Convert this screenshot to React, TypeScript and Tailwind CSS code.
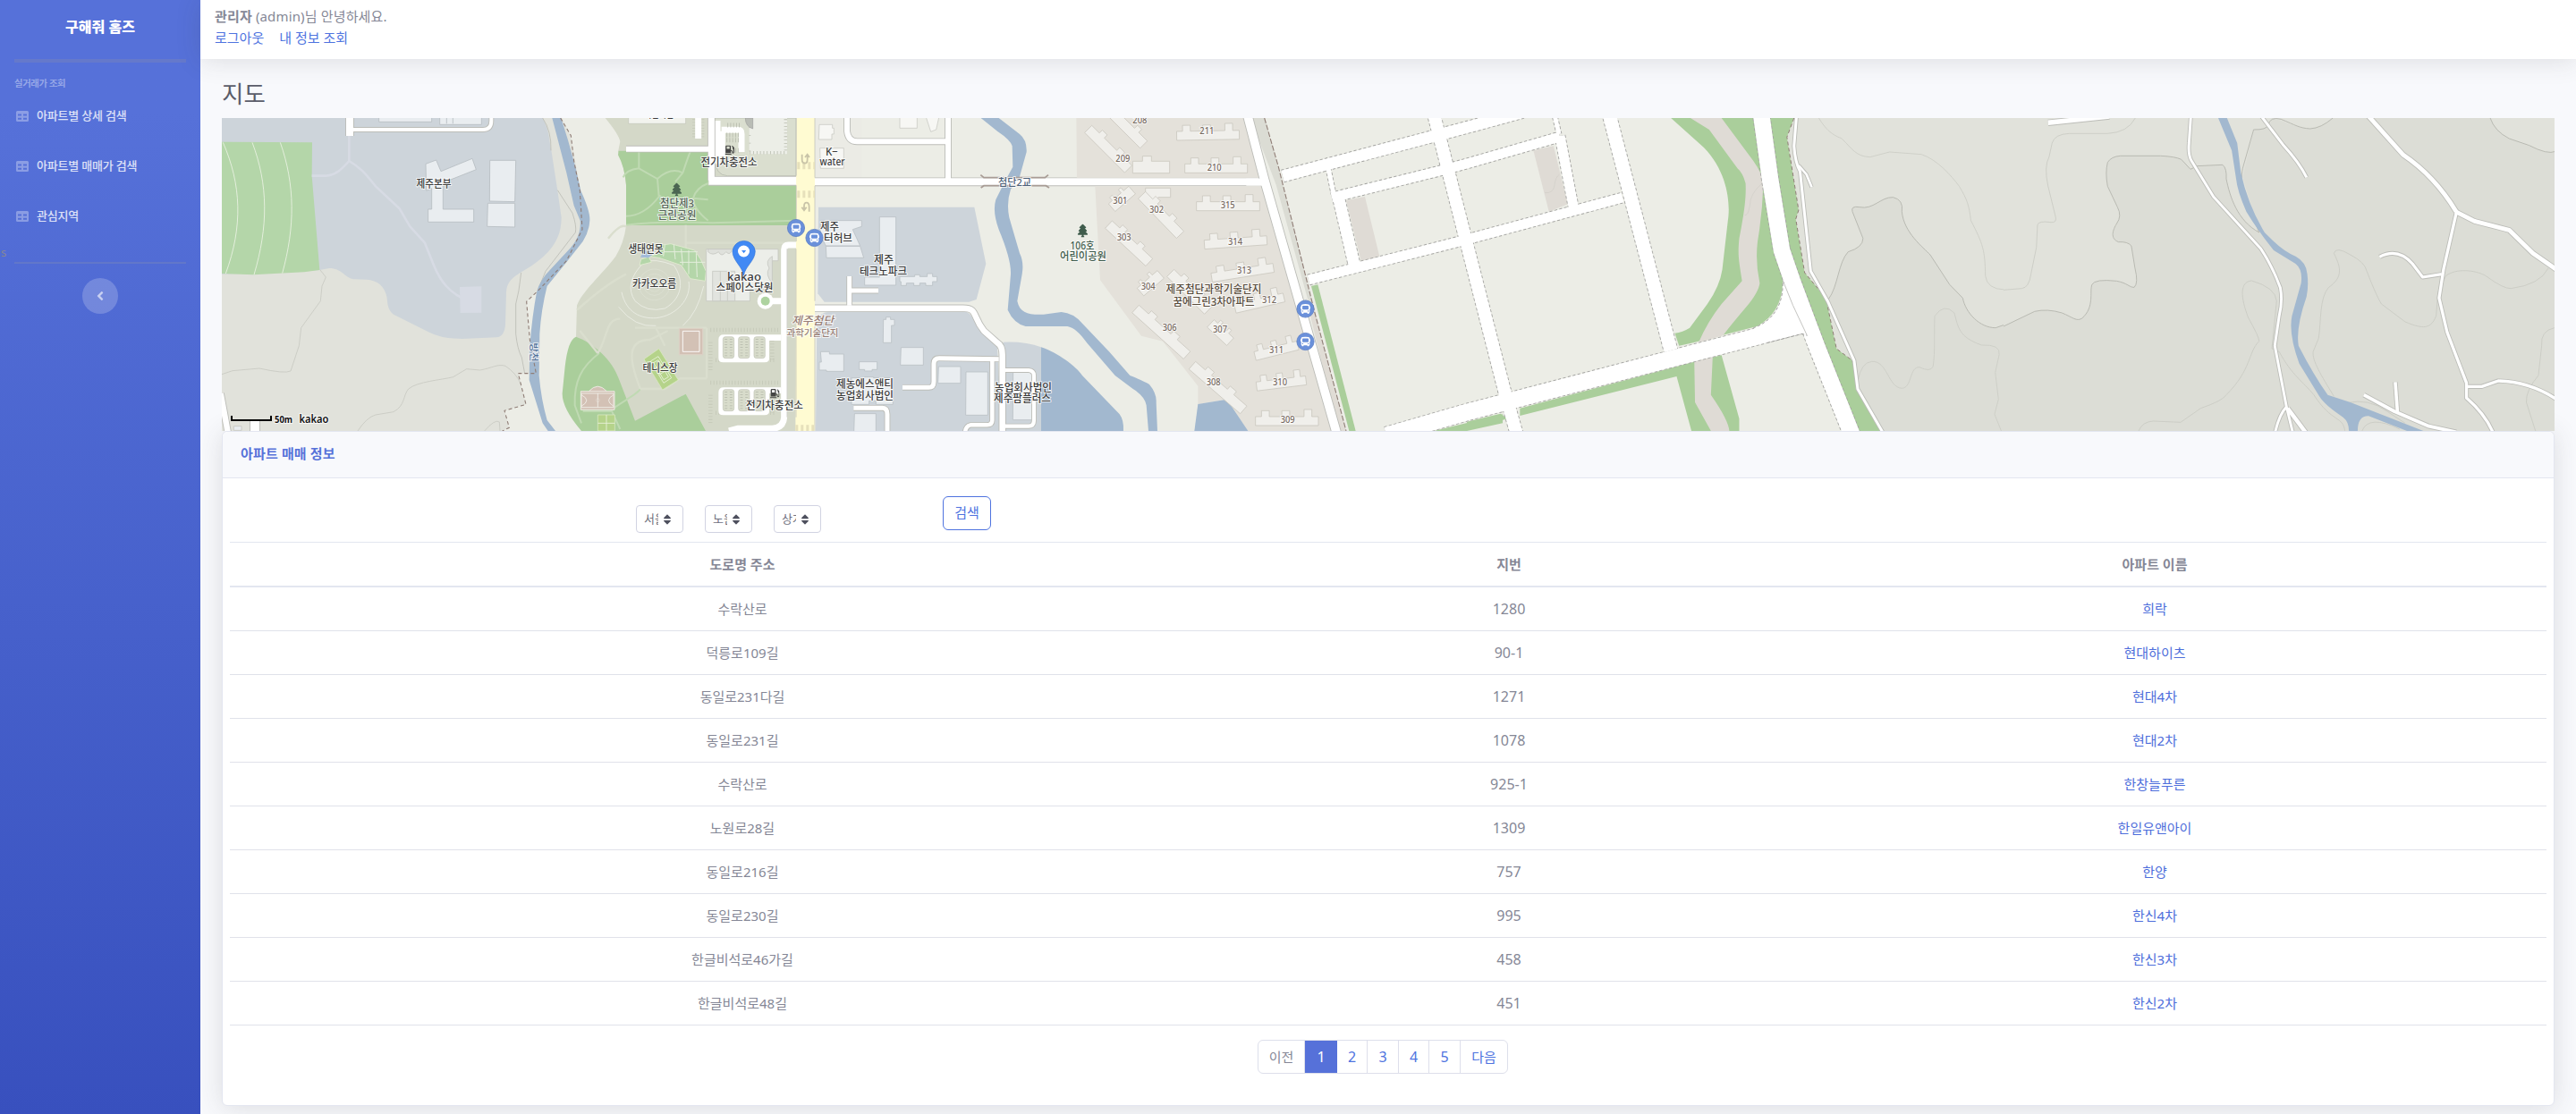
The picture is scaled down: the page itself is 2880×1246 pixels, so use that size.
import React from "react";
import { FaAngleLeft, FaGasPump, FaBus, FaTree, FaSort } from "react-icons/fa";

type RoadSpec = { d: string; w: number };

const menu = ["아파트별 상세 검색", "아파트별 매매가 검색", "관심지역"];

const apartments: [string, string, string][] = [
  ["수락산로", "1280", "희락"],
  ["덕릉로109길", "90-1", "현대하이츠"],
  ["동일로231다길", "1271", "현대4차"],
  ["동일로231길", "1078", "현대2차"],
  ["수락산로", "925-1", "한창늘푸른"],
  ["노원로28길", "1309", "한일유앤아이"],
  ["동일로216길", "757", "한양"],
  ["동일로230길", "995", "한신4차"],
  ["한글비석로46가길", "458", "한신3차"],
  ["한글비석로48길", "451", "한신2차"],
];

function Roads({ items, dashed, casing = "#bcbdb8" }: { items: RoadSpec[]; dashed?: boolean; casing?: string }) {
  return (
    <g fill="none" strokeLinejoin="round">
      {items.map((r, i) => (
        <path key={"c" + i} d={r.d} stroke={dashed ? "#a3a3a0" : casing} strokeWidth={r.w + 1.8} strokeDasharray={dashed ? "3.2 2.4" : undefined} />
      ))}
      {items.map((r, i) => (
        <path key={"f" + i} d={r.d} stroke="#fff" strokeWidth={r.w} />
      ))}
    </g>
  );
}

function Slab({ x, y, r = 0, w = 210 }: { x: number; y: number; r?: number; w?: number }) {
  return (
    <path
      transform={`translate(${x} ${y}) rotate(${r}) scale(${w / 210} 1)`}
      d="M0 24H20V4H46V24H88V4H114V24H162V0H188V24H210V54H0Z"
      fill="#f0efeb"
      stroke="#c9c6be"
      strokeWidth="0.8"
    />
  );
}

function Tower({ x, y, r, w = 180 }: { x: number; y: number; r: number; w?: number }) {
  return (
    <path
      transform={`translate(${x} ${y}) rotate(${r}) scale(${w / 180} 1)`}
      d="M0 0H34V-14H56V0H112V-14H134V0H180V34H0Z"
      fill="#f0efeb"
      stroke="#c9c6be"
      strokeWidth="0.8"
    />
  );
}

function Label({ x, y, w, s = 12, c = "#3c3c3c", children, weight = 500, italic }: { x: number; y: number; w: number; s?: number; c?: string; children: string; weight?: number; italic?: boolean }) {
  return (
    <text
      x={x - w / 2}
      y={y + s * 0.36}
      textLength={w}
      lengthAdjust="spacingAndGlyphs"
      fontSize={s}
      fontWeight={weight}
      fontStyle={italic ? "italic" : undefined}
      fill={c}
      stroke="#ffffff"
      strokeOpacity="0.75"
      strokeWidth="2"
      paintOrder="stroke"
    >
      {children}
    </text>
  );
}

function BusStop({ x, y }: { x: number; y: number }) {
  return (
    <g>
      <circle cx={x} cy={y} r="9.6" fill="#6a90da" stroke="#5c7fc4" strokeWidth="0.8" />
      <FaBus x={x - 5.5} y={y - 5.5} size={11} color="#fff" />
    </g>
  );
}

function ParkingLot({ y }: { y: number }) {
  return (
    <g transform={`translate(0 ${y})`}>
      <path d="M283 9H512M283 50V150M490 45V110M300 110H500" stroke="#c3c7b7" strokeWidth="4.5" strokeDasharray="0.8 2.6" fill="none" />
      <path d="M327 25H520V45H480V105Q480 118 465 118H325Q310 118 310 105V42Q310 25 327 25Z" fill="#fff" />
      {[325, 377, 429].map((x) => (
        <g key={x}>
          <rect x={x} y="32" width="37" height="72" rx="8" fill="#d8dccb" stroke="#bfc3b5" strokeWidth="2" />
          <path d={`M${x + 10} 39V98M${x + 27} 39V98`} stroke="#b4b8aa" strokeWidth="3" strokeDasharray="0.7 2.4" />
        </g>
      ))}
    </g>
  );
}

const slabs: [number, number, number, number][] = [
  [466, 57, -1, 210], [494, 166, 0, 210], [533, 293, 0, 212], [557, 422, -4, 210], [578, 533, -9, 210],
  [654, 638, -13, 168], [720, 797, -14, 148], [730, 898, -7, 167], [731, 1014, 0, 211],
];
const towers: [number, number, number, number][] = [
  [182, 61, 45, 190], [255, 0, 45, 160], [362, 283, 46, 185], [250, 381, 43, 186], [458, 544, 45, 178],
  [340, 664, 42, 232], [592, 713, 43, 90], [530, 853, 41, 228], [238, 324, -41, 90], [334, 607, -41, 90],
];
const numbers: [string, number, number][] = [
  ["208", 343, 42], ["211", 568, 78], ["209", 286, 171], ["210", 593, 201], ["301", 277, 312], ["302", 399, 342], ["315", 638, 329],
  ["303", 290, 437], ["314", 663, 450], ["313", 693, 548], ["304", 371, 602], ["312", 777, 645], ["306", 443, 738], ["307", 612, 746],
  ["311", 801, 815], ["308", 590, 923], ["310", 813, 921], ["309", 839, 1049],
];

function WestDistrict() {
  return (
    <g transform="translate(240 120) scale(.33333)">
      <path fill="#e1e2db" d="M24 36H1165L1195 100L1225 270L1232 420L1180 510L1090 610L1046 650L1055 760L1060 893H1018L1044 997L972 1018L988 1075L965 1086H24Z" />
      <path fill="#cdd4da" d="M24 36H1100C1125 80 1122 120 1130 150L1150 280L1163 370C1163 430 1140 490 1030 552C1000 570 980 585 978 620L975 730Q972 770 945 772L830 777Q760 776 720 755L600 695C580 680 580 660 578 640C572 600 545 580 510 578L465 577C435 570 425 540 385 540L352 546L24 560Z" />
      <path fill="#b4d6a9" d="M24 116L327 118L326 230L352 546L300 553L130 562L24 558Z" />
      <g fill="none" stroke="#e4efdc" strokeWidth="1">
        <path d="M28 118C90 260 95 400 37 558M126 118C180 260 180 400 132 562M220 118C270 260 270 400 227 557" />
      </g>
      <g fill="none" stroke="#d7dbe4" strokeWidth="2.6">
        <path d="M451 95V180C420 215 400 230 370 230H326M451 180C500 210 510 230 540 265L620 340L655 400L705 455L735 530C760 590 790 620 830 640" />
      </g>
      <path fill="#d7dbe4" d="M822 603L895 601V689L824 690Z" />
      <g fill="#e9edf0" stroke="#b9c0c4" strokeWidth="0.9">
        <path d="M708 190L743 177L759 215L864 172L877 209L766 253V342H869V385H716V342H728V272L710 280Z" />
        <path d="M923 178H1010L1007 317L922 315ZM916 322H1007V402L914 400ZM551 30H728V49H551ZM755 30H895V58H755ZM778 30V55M799 30V55" />
      </g>
      <g fill="none" stroke="#c7c8c0" strokeWidth="0.8">
        <path d="M354 546L373 570L360 600L355 650L290 740L283 800L255 885Q235 895 150 876L60 884L24 896" />
        <path d="M480 1086Q510 1040 540 1032L600 1022C640 1000 630 970 650 945C680 920 760 915 800 905L845 878L890 882C930 875 950 860 975 868Q1010 890 1028 930M905 1086Q940 1045 955 1056L957 1086" />
        <path d="M1028 555L1020 615L1010 660V760Q1015 810 1030 840L1040 893M1100 36Q1130 80 1128 145M1150 278L1200 355Q1215 400 1210 420L1110 550L1085 612" stroke="#babbb4" />
      </g>
      <path fill="#a2b8cf" d="M1132 36H1162L1185 110L1210 200L1228 280Q1260 350 1258 380Q1255 420 1235 450L1180 520L1115 600Q1095 680 1090 760L1088 900Q1095 980 1115 1050L1143 1086H1118L1100 1060L1055 915L1057 800Q1065 700 1080 620Q1090 580 1130 540L1195 470Q1230 430 1226 380L1205 330L1180 220Z" />
      <path fill="none" stroke="#8f7d76" strokeWidth="1.1" strokeDasharray="4 3" d="M1160 36L1195 95L1205 180L1225 280L1233 410L1180 515L1090 610L1046 652L1057 780L1078 893H1018L1044 997L972 1018L988 1075L965 1086" />
      <Roads items={[{ d: "M453 30V96", w: 8 }, { d: "M460 75H900Q928 75 928 45V30", w: 4 }]} />
      <Roads items={[{ d: "M20 960L46 1100", w: 6.5 }, { d: "M135 1050V1090", w: 10 }]} />
      <path fill="#e9edf0" stroke="#c4c5be" strokeWidth="0.8" d="M64 1070H90V1084H64Z" />
    </g>
  );
}

function CentralDistrict() {
  return (
    <g transform="translate(700 120) scale(.33333)">
      <path fill="#d4d8c8" d="M-70 36Q-25 90 -20 115L-27 150Q-5 200 0 260V395Q-5 450 -35 500C-80 560 -150 620 -165 665L-168 770L-190 800L-212 960L-150 1086H570V36Z" />
      <path fill="#aace9b" d="M-25 146H275V262H570V396H0V260Q-5 200 -27 160Z" />
      <path fill="#aace9b" d="M-168 770C-110 790 -45 850 -25 910L30 1052L200 962L267 1086H-150Q-215 1010 -214 960L-205 870Q-195 780 -168 770Z" />
      <g fill="none" stroke="#c0dab3" strokeWidth="2">
        <path d="M43 150V205Q0 210 -10 235M43 205L105 240Q150 200 190 220M105 240L110 300Q60 365 0 365M110 295L135 315H190L225 305L275 310M190 220Q210 160 215 150M190 220L165 250M225 305Q235 270 275 255M225 305Q225 340 275 380M0 395Q120 380 290 388L570 380" />
        <path d="M-90 825C-150 870 -175 920 -172 1000L-150 1060M-50 1015C0 980 40 960 48 945M-50 1015L-20 1080M-145 1020H-50" />
      </g>
      <g fill="none" stroke="#dadece" strokeWidth="2.4">
        <path d="M0 560C-80 600 -140 660 -165 680M-60 440Q-20 390 0 400M-20 710C-70 710 -60 770 -95 825M-155 750L-95 825M270 740V910M48 945C10 850 0 780 80 780L140 750M48 945H130L180 910H270M30 740H270M100 740L130 800M200 395V470M200 455H560" />
      </g>
      <g fill="none" stroke="#ebede4" strokeWidth="0.9">
        <circle cx="95" cy="595" r="23" /><circle cx="95" cy="595" r="36" /><circle cx="95" cy="595" r="52" />
        <path d="M60 520Q95 505 160 530C195 580 190 640 130 675Q70 690 30 650Q-10 590 60 520ZM-15 620C0 690 50 710 100 707C170 700 220 640 210 585M-25 670Q30 740 100 733M190 733Q240 690 260 600" />
      </g>
      <path fill="#b4d6a9" stroke="#dfeacf" strokeWidth="1" d="M100 465L150 458L230 480L250 510L268 550L265 583L215 575L185 530L110 505L75 500L85 520L45 530L50 510L110 490Z" />
      <path fill="none" stroke="#e5eedd" strokeWidth="1" d="M130 460L125 500M160 460L165 510M185 475L190 530M210 480V560M235 490L238 570M125 485H240M180 520H265" />
      <path fill="#a2bbd9" d="M65 480L88 495L75 505L48 503L55 490Z" />
      <g strokeWidth="0.9" fill="#d3c1b5" stroke="#dfd2c8">
        <path d="M178 742H257V830H178Z" /><path stroke="#fff" fill="none" d="M190 751H246V820H190Z" />
        <path fill="#d3c1b5" stroke="#f1eee8" d="M-152 953H-39V1015H-152ZM-150 960H-42V1007H-150ZM-95 960V1007M-150 965Q-115 983 -150 1003M-42 965Q-75 983 -42 1003M-125 953Q-95 920 -65 953" />
        <circle cx="-95" cy="983" r="6" fill="none" stroke="#f1eee8" />
      </g>
      <path fill="#b5d38a" stroke="#d9e8c2" strokeWidth="0.8" d="M60 845L110 810L175 915L122 948ZM-95 1032H-38V1086H-95Z" />
      <path fill="none" stroke="#e8f1d9" strokeWidth="0.9" d="M82 852L108 836L152 908L126 925ZM92 857L108 848L142 905L126 914ZM97 876L120 862M110 898L133 884M-66 1032V1086M-95 1060H-38" />
      <path fill="#f2f3ee" stroke="#c5c8bc" strokeWidth="0.8" d="M8 30H200V55H8Z" />
      <path fill="none" stroke="#c3c7b7" strokeWidth="4" strokeDasharray="0.8 2.4" d="M228 40V100M256 40V100" />
      <path fill="#dadecf" stroke="#b9bcb0" strokeWidth="0.8" d="M297 36V175Q300 228 340 230H570V36Z" />
      <path fill="#eceee7" d="M413 30H540V157H413Z" />
      <path fill="none" stroke="#b9bdb0" strokeWidth="3.5" strokeDasharray="0.8 3" d="M415 152H540M535 40V150" />
      <path fill="none" stroke="#b9bdb0" strokeWidth="2" strokeDasharray="0.8 8" d="M415 40V150" />
      <path fill="none" stroke="#fff" strokeWidth="7" d="M306 45V190M320 76H375Q387 76 387 90V150M242 36V105M322 80V165" />
      <path fill="none" stroke="#b4b8aa" strokeWidth="5" strokeDasharray="0.8 2.4" d="M337 93H378M337 110H378M357 145H378M340 60H388" />
      <path fill="#b9bcb5" stroke="#999" strokeWidth="0.6" d="M425 36V72Q400 65 400 36Z" />
      <Roads items={[{ d: "M0 140H278", w: 6 }, { d: "M286 30V245", w: 7 }, { d: "M277 247H575", w: 9 }]} />
      <g fill="#eceee9" stroke="#c5c7c0" strokeWidth="0.8">
        <path d="M269 476H510V515H490V610H415V650H269Z" /><path fill="#e2e4df" d="M290 550H365V650H290ZM316 550V650M340 550V650" />
        <path fill="#dfe1dc" d="M275 476H355Q350 500 335 485Q320 505 310 485Q290 500 275 485ZM490 500Q465 515 480 540Q465 560 490 590Z" />
      </g>
      <ParkingLot y={738} />
      <ParkingLot y={915} />
      <path fill="none" stroke="#fff" strokeWidth="7" d="M570 462H545Q530 462 530 478V1040Q528 1076 490 1078H375L345 1086M530 650H470" />
      <circle cx="467" cy="650" r="27" fill="#fff" /><circle cx="467" cy="650" r="15" fill="#aed3a0" />

      <path fill="#e9e9e3" d="M634 36H790V236H634Z" opacity=".5" />
      <path fill="#cdd4da" d="M645 335H1168L1207 525L1175 645L1150 653H665L643 625Z" />
      <path fill="#cdd4da" d="M640 720Q650 686 680 686H1140C1160 690 1165 720 1190 750L1245 805L1260 1086H636Z" />
      <path fill="#cdd4da" d="M1265 788Q1340 785 1392 805V1086H1265Z" />
      <path fill="#a2b8cf" d="M1392 805C1450 825 1510 870 1530 900L1655 1030Q1670 1050 1668 1086H1392Z" />
      <path fill="#a2b8cf" d="M1190 36H1250L1320 90Q1345 110 1343 150L1318 240L1290 275Q1275 320 1285 370L1320 490Q1335 520 1328 560L1312 650C1320 690 1350 697 1400 695L1460 687Q1500 690 1530 725L1620 820L1690 900Q1740 920 1755 930Q1780 960 1778 990L1782 1086H1752L1745 1000Q1740 970 1700 945L1640 900L1545 790Q1510 740 1480 735H1340Q1300 725 1280 680L1290 560Q1292 510 1250 410Q1228 350 1240 310L1270 250L1297 200L1295 130Q1290 110 1245 80Z" />
      <g fill="#e9edf0" stroke="#bcc3c7" strokeWidth="0.9">
        <path d="M652 380H790V400L760 410L785 465H670L652 430ZM670 466H785L797 505H672ZM850 368H905V597H800V570H850Z" />
        <path d="M918 568H968V562H985V568H1010V558H1028V568H1043V585H1028V598H1005V590H985V598H965V590H940V598H922V585H918ZM863 712H872V704H887V712H900V732H890V790H862Z" />
        <path d="M652 820H682V828H730V886H672V882H648V855H655ZM782 854H842V880H825V885H800V880H782ZM922 806H997V865H920ZM1048 870H1122V926H1046ZM1140 888H1213V1033H1139ZM1298 885H1362V1049H1297ZM766 1028H838V1090H764Z" />
        <path d="M756 908H800V905H830V908H895V997H838V985H815V997H756Z" />
      </g>
      <g fill="#f7f7f4" stroke="#c9cac4" strokeWidth="0.8">
        <path d="M648 58H692V70H697V90H690V108H646ZM650 137H730V205H652ZM918 30H976V70H918ZM1005 30H1050L1040 75L1022 82Z" />
      </g>
      <Roads
        items={[
          { d: "M741 30V80Q745 115 775 115H1075", w: 6 },
          { d: "M1080 30V245", w: 6 },
          { d: "M630 250H2130", w: 8 },
          { d: "M630 674H1130C1180 674 1160 700 1200 750L1245 790Q1262 800 1262 830V1095", w: 6.5 },
          { d: "M749 567V665M749 615H846", w: 5 },
          { d: "M927 940H1015Q1032 940 1032 920V860Q1032 842 1050 842L1250 845", w: 5 },
          { d: "M1228 850V1050Q1228 1066 1210 1066H1155Q1137 1070 1137 1095", w: 4.5 },
          { d: "M1270 882H1350Q1368 884 1368 900V1050Q1368 1070 1350 1070H1270", w: 4.2 },
          { d: "M763 1009H860Q876 1010 876 1030V1095", w: 5 },
        ]}
      />
      <path fill="#fffbd2" d="M571 30H633V1090H568Z" />
      <path fill="none" stroke="#c5c5bd" strokeWidth="0.8" d="M571 36V230M571 262V450M540 475V1040M570 475V1040M633 36V236M633 264V650M633 700V1090" />
      <path fill="none" stroke="#e6e0bb" strokeWidth="8" strokeDasharray="3 3" d="M574 196H633M574 292H633M568 1078H630" />
      <path fill="none" stroke="#c9c4a8" strokeWidth="1.8" d="M590 158V175Q590 188 600 188Q608 188 608 175V162M600 168L608 158L615 168M614 350V335Q614 320 605 320Q597 320 597 332V345M589 335L597 346L605 335" />
      <path fill="none" stroke="#a89c95" strokeWidth="1.8" d="M1189 227L1200 236H1405L1416 227M1190 270L1200 263H1408L1419 270" />
    </g>
  );
}

function ApartmentDistrict() {
  return (
    <g transform="translate(1160 120) scale(.33333)">
      <path fill="#e4e1da" d="M130 36H695L742 236H132ZM193 265H752L985 1086H705L635 980L538 996V935L420 785L348 767L210 580Z" />
      <path fill="#a2b8cf" d="M538 996L635 980L706 1086H526Z" />
      <path fill="#dbdcd4" d="M715 36H762L808 200L930 690L905 640L800 260Z" />
      <path fill="#e0dcd5" d="M900 640L928 680L1035 1086H1010Z" />
      <path fill="#aace9b" d="M918 600L940 595L1067 1086H1045Z" />
      <path fill="#aace9b" d="M1330 1086L1560 1030V1060L1440 1086Z" />
      <path fill="#f0efeb" stroke="#c9c6be" strokeWidth="0.8" d="M319 181H352V164H382V181H443V221H319ZM362 271H446V302H405L395 325H362Z" />
      {towers.map(([x, y, r, w], i) => <Tower key={i} x={x} y={y} r={r} w={w} />)}
      {slabs.map(([x, y, r, w], i) => <Slab key={i} x={x} y={y} r={r} w={w} />)}
      <Roads items={[{ d: "M704 26L760 240L1005 1100", w: 9.6 }]} />
      <path fill="#fff" d="M700 239H765V263H700Z" />
      <path fill="none" stroke="#8f7d76" strokeWidth="1.1" strokeDasharray="6 2" d="M761 36L808 200L930 690L1035 1086" />
      <path fill="#dfdbd5" d="M1035 312L1098 300L1148 505L1085 515Z" />
    </g>
  );
}

const plannedRoads: RoadSpec[] = [
  { d: "M1434 197L1653 139L1704 125", w: 13 },
  { d: "M1601 120L1612 163L1641 277L1682 437L1697 490", w: 14 },
  { d: "M1489 221L1610 191L1640 183L1744 153", w: 11 },
  { d: "M1485 188L1491 217", w: 5 },
  { d: "M1496 219L1515 300", w: 13 },
  { d: "M1463 313L1632 270L1814 221", w: 11 },
  { d: "M1736 120L1743 150", w: 5 },
  { d: "M1744 152L1760 236", w: 11 },
  { d: "M1797 120L1868 392", w: 15 },
  { d: "M1550 487L1640 461L1889 396L2020 362", w: 18.5 },
  { d: "M1968 120L1979 200L1992 280L2004 315L2031 387L2072 490", w: 18.5 },
];

function ForestEdge() {
  return (
    <g transform="translate(1640 120) scale(.39541 .33333)">
      <path fill="#e1e2db" d="M925 36H1600V1086H1175L1105 940L1090 850L1045 810L1015 640L955 555L930 375L938 345L905 100Z" />
      <path fill="#dcddd6" d="M1022 645C1050 600 1050 520 1078 485Q1120 470 1120 440L1090 350Q1085 330 1110 335C1150 345 1170 300 1205 302Q1235 310 1230 350C1235 420 1290 470 1310 495L1365 595L1402 640C1410 690 1450 740 1495 740L1572 708V1086H1172L1105 940L1090 850Z" />
      <path fill="none" stroke="#b4b5ae" strokeWidth="0.9" d="M1022 645C1050 600 1050 520 1078 485Q1120 470 1120 440L1090 350Q1085 330 1110 335C1150 345 1170 300 1205 302Q1235 310 1230 350C1235 420 1290 470 1310 495L1365 595L1402 640C1410 690 1450 740 1495 740L1572 708" />
      <path fill="none" stroke="#cacbc4" strokeWidth="0.8" d="M995 36C1020 85 1040 95 1060 105C1090 140 1100 165 1140 167L1195 150L1285 158C1330 175 1370 230 1392 265C1415 310 1420 330 1425 380C1460 460 1465 480 1466 565Q1470 610 1520 612L1572 608M1105 920Q1115 855 1145 853C1190 850 1190 940 1230 943C1260 940 1250 870 1280 872Q1310 890 1318 870C1325 820 1320 750 1323 700Q1350 655 1378 690C1390 740 1390 770 1455 798Q1510 795 1505 830L1494 890L1503 980L1492 1030L1511 1086" />
      <path fill="#aace9b" d="M577 36L670 135C740 220 745 330 738 380L722 545Q715 600 680 660L630 740Q610 755 588 758L600 800L640 790L820 735Q890 690 893 590L900 300L840 36Z" />
      <path fill="#aace9b" d="M835 36H925L905 100L938 345L930 375L955 555L1015 640L1045 810L1090 850L1105 940L1172 1086H1085L960 780L890 400Z" />
      <path fill="#dfdbd5" d="M632 36H720L810 180Q840 230 838 260Q835 360 822 450Q815 520 828 590Q825 620 790 670Q740 740 725 765L655 790Q680 720 720 660L778 583C770 520 765 500 770 440C785 350 790 300 788 255Q780 220 765 205L685 75Z" />
      <path fill="#aace9b" d="M150 1010L640 855L720 832L770 1045V1086H635L593 903L150 1035ZM0 1055L95 1028L115 1045L0 1084Z" />
      <path fill="#dfdbd5" d="M643 853L695 838L690 965Q740 1050 742 1086H690L645 990Z" />
      <path fill="#dfdbd5" d="M188 145L245 130L285 325L232 350Z" />
      <path fill="none" stroke="#cfcdc6" strokeWidth="0.6" d="M835 255Q800 290 800 330Q795 365 785 362M262 225Q250 235 248 260Q245 290 220 287" />
      <path fill="none" stroke="#8f7d76" strokeWidth="1" strokeDasharray="4 3" d="M925 36L905 100L938 345L930 375L955 555L1015 640L1045 810L1090 850L1105 940L1175 1086" />
      <Roads items={[{ d: "M932 30L925 130Q928 185 942 215L972 550L1020 650L1095 850L1105 945L1178 1095", w: 3 }, { d: "M938 195L960 225L975 268", w: 2.6 }]} />
    </g>
  );
}

function MainJunction() {
  return (
    <g transform="translate(1640 120) scale(.39541 .33333)">
      <path fill="#fff" d="M893 590C895 680 850 725 810 740L850 785L948 758L966 765L975 740L925 600Z" />
      <path fill="none" stroke="#a3a3a0" strokeWidth="1" strokeDasharray="3.2 2.4" d="M893 590C895 680 850 725 810 740M850 790L948 760L962 766" />
      <path fill="none" stroke="#b5b5b1" strokeWidth="0.8" d="M893 580L922 665L962 766" />
    </g>
  );
}

function MountainDistrict() {
  return (
    <g transform="translate(2240 120) scale(.40816 .33333)">
      <path fill="#e1e2db" d="M0 36H1520V1086H0Z" />
      <path fill="#dcddd6" d="M0 735L85 685Q120 675 160 690C190 705 200 720 215 708C250 670 235 620 242 595Q250 575 310 583C340 590 345 605 358 604Q370 590 360 540L350 465Q340 450 315 452C290 440 300 410 310 390Q325 365 312 335L285 265Q278 220 285 185Q295 165 320 163H430Q470 165 487 175L512 208L530 197L600 193Q612 205 610 240C620 300 640 380 700 420L655 235L685 75Q720 73 730 60L735 36C780 50 800 70 840 72Q870 70 902 36H1333Q1345 80 1385 105L1440 128Q1490 160 1512 148V1086H0Z" />
      <path fill="none" stroke="#b4b5ae" strokeWidth="0.9" d="M0 735L85 685Q120 675 160 690C190 705 200 720 215 708C250 670 235 620 242 595Q250 575 310 583C340 590 345 605 358 604Q370 590 360 540L350 465Q340 450 315 452C290 440 300 410 310 390Q325 365 312 335L285 265Q278 220 285 185Q295 165 320 163H430Q470 165 487 175L512 208L530 197L600 193Q612 205 610 240C620 300 640 380 700 420C665 310 645 260 655 205L685 75Q720 76 725 60Q730 30 760 40C800 60 810 70 840 72Q870 70 902 36M1333 36Q1345 80 1385 105L1440 128Q1490 160 1512 148" />
      <path fill="none" stroke="#c8c9c2" strokeWidth="0.8" d="M361 36Q340 85 285 88H180Q140 90 133 120L125 165Q110 200 122 265L143 370Q145 388 130 386Q95 380 93 395L90 470L75 560Q70 605 50 608L0 613M370 1086Q380 1055 410 1053L485 1057L540 1010Q600 985 610 965C680 880 670 820 700 785Q700 770 670 705C650 640 645 585 680 582Q745 605 748 650L735 810L755 820C790 900 820 920 850 965C900 1060 930 1035 935 1086" />
      <path fill="none" stroke="#c8c9c2" strokeWidth="0.8" d="M905 970C870 900 845 850 848 820L863 775C870 720 865 640 890 605C930 570 925 540 905 490Q910 465 950 495Q990 520 995 550Q1020 630 1035 660L1100 720C1150 745 1170 745 1185 700L1190 620L1212 565C1240 540 1290 545 1320 565Q1370 610 1390 608Q1470 595 1492 540M1509 740Q1470 750 1474 800L1465 900Q1430 950 1432 990L1457 1086M940 992Q1000 975 1050 1020L1100 1060M982 1086Q1000 1030 1085 1080" />
      <path fill="#a2b8cf" d="M588 36H612L640 120L650 220Q670 330 715 420L740 450Q770 485 800 500Q830 520 832 560Q836 600 830 635Q800 740 808 800Q850 900 888 965L950 990L1150 1086H1105L1000 1036Q970 1035 970 1086H946Q946 1055 930 1040Q880 1000 865 970L810 860Q780 760 790 700L815 590Q820 545 800 525L740 480Q700 420 665 350Q640 280 637 240L625 145Z" />
      <Roads
        items={[
          { d: "M122 52L290 30", w: 5.5 },
          { d: "M513 30L508 120Q505 160 515 180L575 300L705 475Q735 530 758 605Q765 650 755 700L743 800L775 1005Q755 1030 743 1095M775 1005L793 1095", w: 2.9 },
          { d: "M778 1010L830 1095", w: 4.5 },
          { d: "M706 30L765 125Q810 185 830 235", w: 3 },
          { d: "M1000 30L1095 160Q1180 230 1240 350", w: 4.8 },
          { d: "M1238 350L1290 382L1385 412L1450 490L1515 545", w: 4.8 },
          { d: "M1240 355L1205 545L1193 640L1215 755L1268 925V975Q1320 1030 1342 1095", w: 3.3 },
          { d: "M1200 560L1148 570L1120 525Q1080 470 1030 502", w: 3.2 },
          { d: "M1268 937H1310L1355 918Q1440 920 1515 980", w: 3.4 },
          { d: "M987 965L1070 1020L1165 1070L1240 1090", w: 3.8 },
          { d: "M1073 922L1079 1022", w: 3.6 },
        ]}
      />
    </g>
  );
}

function MapLabels() {
  return (
    <g>
      <Label x={485} y={205.5} w={39}>제주본부</Label>
      <Label x={737} y={128} w={33}>카본카본</Label>
      <Label x={815} y={182} w={63}>전기차충전소</Label>
      <Label x={757} y={228} w={38} c="#56655a">첨단제3</Label>
      <Label x={757} y={241} w={43} c="#56655a">근린공원</Label>
      <Label x={722} y={278.5} w={39}>생태연못</Label>
      <Label x={731.5} y={317.5} w={49}>카카오오름</Label>
      <Label x={738} y={411.5} w={39}>테니스장</Label>
      <Label x={866} y={454} w={64}>전기차충전소</Label>
      <Label x={930} y={170} w={14}>K−</Label>
      <Label x={930.5} y={181} w={28}>water</Label>
      <Label x={927.5} y={254} w={21}>제주</Label>
      <Label x={937} y={266.5} w={32}>터허브</Label>
      <Label x={988} y={290.5} w={22}>제주</Label>
      <Label x={987.5} y={303.5} w={53}>테크노파크</Label>
      <Label x={832} y={309} w={38} s={12.5}>kakao</Label>
      <Label x={832.5} y={321.5} w={64}>스페이스닷원</Label>
      <Label x={908.5} y={358} w={47} s={12.5} c="#987e76" italic>제주첨단</Label>
      <Label x={908.5} y={372} w={58} s={10.5} c="#987e76">과학기술단지</Label>
      <Label x={967} y={430} w={64}>제농에스앤티</Label>
      <Label x={967} y={443} w={64}>농업회사법인</Label>
      <Label x={1144} y={433.5} w={64}>농업회사법인</Label>
      <Label x={1143} y={446} w={64}>제주팜플러스</Label>
      <Label x={1134.5} y={204} w={37} s={11} c="#4e627a">첨단2교</Label>
      <Label x={1210} y={275} w={27} c="#3f5c4c">106호</Label>
      <Label x={1211} y={286.5} w={52} c="#3f5c4c">어린이공원</Label>
      {numbers.map(([n, x, y]) => (
        <Label key={n} x={1160 + x / 3} y={120 + y / 3} w={16} s={10} c="#76695f">{n}</Label>
      ))}
      <Label x={1357} y={323.5} w={107} c="#574b3c">제주첨단과학기술단지</Label>
      <Label x={1357} y={337.5} w={91} c="#574b3c">꿈에그린3차아파트</Label>
      <g transform="translate(597 394) rotate(90)"><Label x={0} y={0} w={21} s={10} c="#4f6f96">방천</Label></g>
      <FaGasPump x={810.5} y={162.5} size={10.5} color="#444" />
      <FaGasPump x={861} y={435} size={10.5} color="#444" />
      <FaTree x={749} y={204.5} size={15} color="#4b6552" />
      <FaTree x={1203} y={250.5} size={15} color="#3f5c4c" />
      <BusStop x={890} y={255} /><BusStop x={910.5} y={266} /><BusStop x={1459.5} y={345.5} /><BusStop x={1459.5} y={382} />
      <path d="M831.5 308C830 298 819 291.500 819 281A12.700 12.700 0 0 1 844.300 281C844.300 291.500 833 298 831.500 308Z" fill="#4189f4" stroke="#2c6fd4" strokeWidth="0.6" />
      <circle cx="831.500" cy="281" r="6.500" fill="#fff" /><path d="M829 280H834.200L831.600 283.200Z" fill="#4189f4" />
      <path d="M259 465V470H303V465" stroke="#000" strokeWidth="2" fill="none" />
      <Label x={317} y={469} w={20} s={10.5} c="#111" weight={700}>50m</Label>
      <Label x={351} y={468.5} w={33} s={12} c="#111" weight={600}>kakao</Label>
    </g>
  );
}

function DistrictMap() {
  return (
    <svg
      viewBox="248 132 2608 350"
      className="relative z-[1] block h-[350px] w-full shrink-0 overflow-hidden font-['Noto_Sans','Noto_Sans_CJK_KR',sans-serif] [&_path]:[vector-effect:non-scaling-stroke]"
    >
      <rect x="248" y="132" width="2608" height="350" fill="#ecede6" />
      <WestDistrict />
      <CentralDistrict />
      <ApartmentDistrict />
      <ForestEdge />
      <Roads items={plannedRoads} dashed />
      <MainJunction />
      <MountainDistrict />
      <MapLabels />
    </svg>
  );
}

function GridIcon() {
  return (
    <svg viewBox="0 0 14 12" className="h-3 w-3.5 shrink-0" fill="#fff" fillOpacity=".32" fillRule="evenodd">
      <path d="M1.500 0H12.500A1.500 1.500 0 0 1 14 1.500V10.500A1.500 1.500 0 0 1 12.500 12H1.500A1.500 1.500 0 0 1 0 10.500V1.500A1.500 1.500 0 0 1 1.500 0ZM2 3.500V5.500H6V3.500ZM8 3.500V5.500H12V3.500ZM2 7.800V9.800H6V7.800ZM8 7.800V9.800H12V7.800Z" />
    </svg>
  );
}

function Sidebar() {
  return (
    <aside className="flex w-56 shrink-0 flex-col bg-linear-to-b from-[#5671d9] from-10% to-[#3850be] to-100%">
      <div className="flex h-[66px] items-start justify-center pt-5 text-base leading-5 font-extrabold text-white">구해줘 홈즈</div>
      <div className="mx-4 h-1 bg-[#6579cb]" />
      <div className="mx-4 mt-[15px] h-4 text-[10.4px] leading-4 font-bold tracking-[-0.4px] text-white/40">실거래가 조회</div>
      <nav className="mt-px flex flex-col">
        {menu.map((m) => (
          <a key={m} className="flex h-14 items-center gap-[9px] px-[18px] text-[13px] font-medium tracking-[-0.2px] text-white/80">
            <GridIcon />
            <span>{m}</span>
          </a>
        ))}
      </nav>
      <div className="mt-[4px] h-4 pl-px text-[13px] leading-4 text-[#858796]">s</div>
      <div className="mx-4 mt-[3px] h-0.5 bg-[#6277c9]" />
      <button className="mx-auto mt-4 flex size-10 items-center justify-center rounded-full bg-white/20">
        <FaAngleLeft className="size-4 text-white/60" />
      </button>
    </aside>
  );
}

function SmallSelect({ value }: { value: string }) {
  return (
    <div className="flex h-[31px] w-[53px] items-center justify-between rounded border border-[#d1d3e2] bg-white pr-2.5 pl-2 text-[13px] text-[#6e707e]">
      <span className="w-[16px] overflow-hidden whitespace-nowrap">{value}</span>
      <FaSort className="size-[14px] text-[#4e505e]" />
    </div>
  );
}

const cellBase = "flex items-center justify-center border-r border-[#dddfeb]";
const headCell = "h-[51px] border-t border-b-2 border-[#e3e6f0] p-0";
const bodyCell = "h-[49px] border-b border-[#e0e2ea] p-0";

export default function App() {
  return (
    <div className="flex h-[1246px] w-full overflow-hidden bg-[#f8f9fc] font-['Noto_Sans','Noto_Sans_CJK_KR',sans-serif] text-[15px] text-[#858796]">
      <Sidebar />
      <div className="flex min-w-0 flex-1 flex-col">
        <header className="z-10 flex h-[66px] shrink-0 flex-col bg-white px-4 pt-1.5 leading-6 shadow-[0_2px_28px_rgba(58,59,69,0.15)]">
          <p className="tracking-[0.15px]"><b>관리자</b> (admin)님 안녕하세요.</p>
          <p className="flex gap-[17px] text-[#4e73df]"><a>로그아웃</a><a>내 정보 조회</a></p>
        </header>
        <main className="flex flex-1 flex-col px-6 pt-[22px]">
          <h1 className="h-11 text-[26.5px] leading-[34px] font-normal text-[#5a5c69]">지도</h1>
          <DistrictMap />
          <section className="flex h-[755px] shrink-0 flex-col rounded-md border border-[#e3e6f0] bg-white shadow-[0_2px_28px_rgba(58,59,69,0.15)]">
            <div className="flex h-[52px] shrink-0 items-center rounded-t-md border-b border-[#e3e6f0] bg-[#f8f9fc] px-5 pb-0.5"><h6 className="font-bold tracking-[0.15px] text-[#5671d9]">아파트 매매 정보</h6></div>
            <div className="flex flex-col px-2">
              <div className="flex h-[71px] items-start pl-[454px]">
                <div className="flex gap-6 pt-[30px]">
                  <SmallSelect value="서울시" />
                  <SmallSelect value="노원구" />
                  <SmallSelect value="상계동" />
                </div>
                <button className="mt-5 ml-[136px] h-[38px] w-[54px] rounded-md border border-[#4e73df] pb-0.5 text-[#4e73df]">검색</button>
              </div>
              <table className="w-full table-fixed border-separate border-spacing-0 text-center leading-6">
                <colgroup><col className="w-[1146px]" /><col className="w-[568px]" /><col /></colgroup>
                <thead>
                  <tr>
                    <th className={headCell}>도로명 주소</th><th className={headCell}>지번</th><th className={headCell}>아파트 이름</th>
                  </tr>
                </thead>
                <tbody>
                  {apartments.map(([road, lot, name]) => (
                    <tr key={name}>
                      <td className={bodyCell}>{road}</td>
                      <td className={bodyCell + " text-base"}>{lot}</td>
                      <td className={bodyCell + " text-[#4e6edb]"}>{name}</td>
                    </tr>
                  ))}
                </tbody>
              </table>
              <div className="mt-4 ml-[1149px] flex h-[38px] w-[280px] overflow-hidden rounded-md border border-[#dddfeb] text-[#4e73df]">
                <span className={cellBase + " w-[52px] text-[#858796]"}>이전</span>
                <span className="-my-px flex w-9 items-center justify-center bg-[#5671d9] text-base text-white">1</span>
                <span className={cellBase + " w-[34px] text-base"}>2</span>
                <span className={cellBase + " w-[35px] text-base"}>3</span>
                <span className={cellBase + " w-[34px] text-base"}>4</span>
                <span className={cellBase + " w-[35px] text-base"}>5</span>
                <span className="flex flex-1 items-center justify-center">다음</span>
              </div>
            </div>
          </section>
        </main>
      </div>
    </div>
  );
}
